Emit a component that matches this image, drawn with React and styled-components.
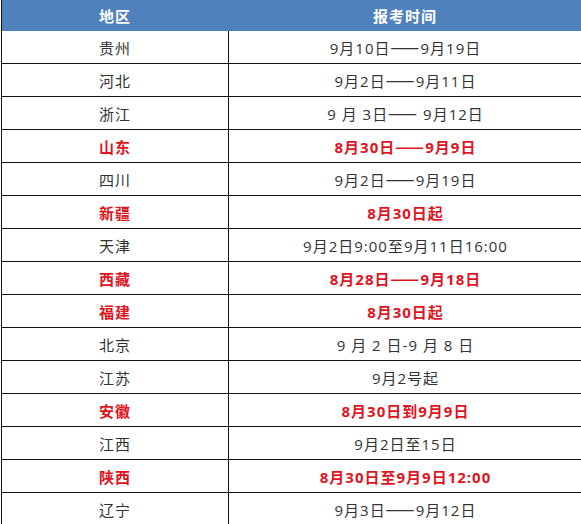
import React from 'react';
import styled, { createGlobalStyle } from 'styled-components';

const GlobalStyle = createGlobalStyle`
  html, body {
    margin: 0;
    padding: 0;
    background: #fff;
  }
  body {
    font-family: "Open Sans", "Noto Sans CJK SC", sans-serif;
  }
`;

const rows = [
  { area: '贵州', time: '9月10日——9月19日' },
  { area: '河北', time: '9月2日——9月11日' },
  { area: '浙江', time: '9 月 3日—— 9月12日' },
  { area: '山东', time: '8月30日——9月9日', hot: true },
  { area: '四川', time: '9月2日——9月19日' },
  { area: '新疆', time: '8月30日起', hot: true },
  { area: '天津', time: '9月2日9:00至9月11日16:00' },
  { area: '西藏', time: '8月28日——9月18日', hot: true },
  { area: '福建', time: '8月30日起', hot: true },
  { area: '北京', time: '9 月 2 日-9 月 8 日' },
  { area: '江苏', time: '9月2号起' },
  { area: '安徽', time: '8月30日到9月9日', hot: true },
  { area: '江西', time: '9月2日至15日' },
  { area: '陕西', time: '8月30日至9月9日12:00', hot: true },
  { area: '辽宁', time: '9月3日——9月12日' },
];

const Table = styled.div`
  width: 590px;
  margin-left: 1px;
  border-left: 1px solid #111;
`;

const HeadRow = styled.div`
  display: grid;
  grid-template-columns: 226px 1fr;
  height: 31px;
  background: #4f81bd;
`;

const HeadCell = styled.div`
  display: flex;
  align-items: center;
  justify-content: center;
  color: #fff;
  font-size: 15px;
  font-weight: bold;
  letter-spacing: 1px;
  padding-right: ${(p) => (p.$wide ? '10px' : '0')};
`;

const Row = styled.div`
  display: grid;
  grid-template-columns: 226px 1fr;
  height: 32px;
  border-top: ${(p) => (p.$first ? 'none' : '1px solid #111')};
`;

const Cell = styled.div`
  display: flex;
  align-items: center;
  justify-content: center;
  font-size: 15px;
  letter-spacing: 1px;
  color: ${(p) => (p.$hot ? '#e0141e' : '#333')};
  font-weight: ${(p) => (p.$hot ? 'bold' : 'normal')};
  border-left: ${(p) => (p.$right ? '1px solid #111' : 'none')};
  padding-right: ${(p) => (p.$right ? '10px' : '0')};
  white-space: pre;
`;

const Dash = styled.span`
  letter-spacing: -1.5px;
  margin-right: 3px;
`;

function renderTime(text) {
  const parts = text.split('——');
  return parts.map((part, i) => (
    <React.Fragment key={i}>
      {i > 0 && <Dash>——</Dash>}
      {part}
    </React.Fragment>
  ));
}

export default function App() {
  return (
    <>
      <GlobalStyle />
      <Table>
        <HeadRow>
          <HeadCell>地区</HeadCell>
          <HeadCell $wide>报考时间</HeadCell>
        </HeadRow>
        {rows.map((r, i) => (
          <Row key={r.area} $first={i === 0}>
            <Cell $hot={r.hot}>{r.area}</Cell>
            <Cell $hot={r.hot} $right>{renderTime(r.time)}</Cell>
          </Row>
        ))}
      </Table>
    </>
  );
}
